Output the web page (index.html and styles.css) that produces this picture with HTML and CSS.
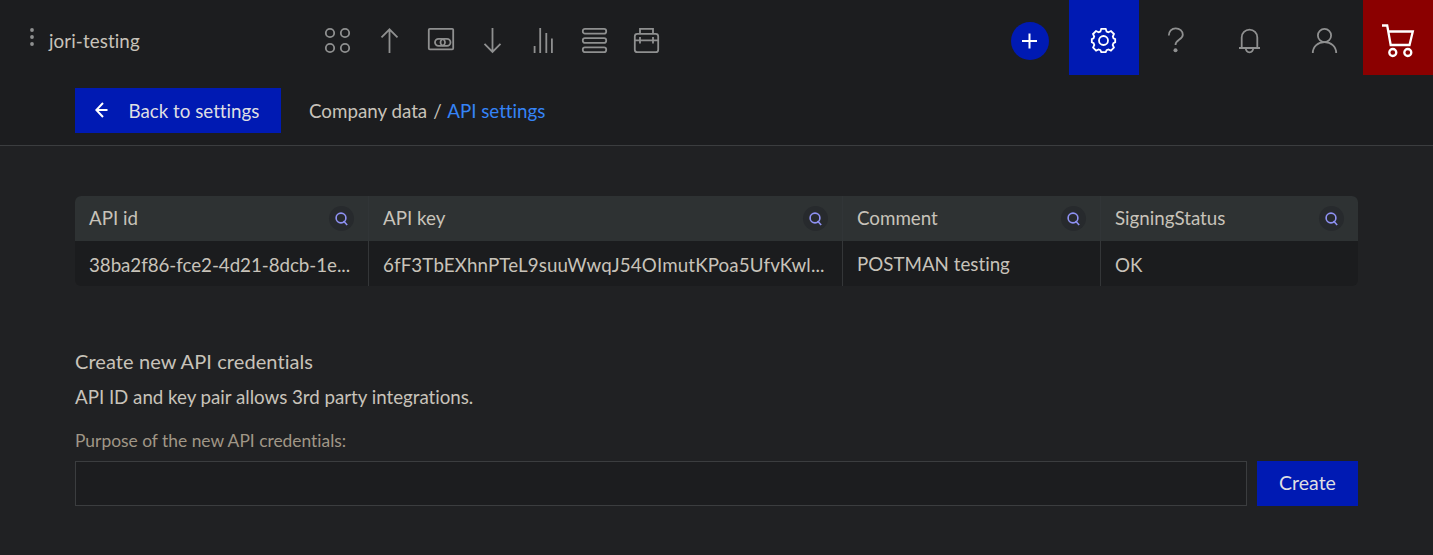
FILE: index.html
```html
<!DOCTYPE html>
<html lang="en">
<head>
<meta charset="utf-8">
<title>API settings</title>
<link rel="stylesheet" href="styles.css">
</head>
<body>
<header class="topbar">
  <div class="brand">
    <svg class="dots" width="6" height="20" fill="currentColor"><circle cx="3" cy="3" r="1.9"/><circle cx="3" cy="10" r="1.9"/><circle cx="3" cy="17" r="1.9"/></svg>
    <span class="company">jori-testing</span>
  </div>
  <nav class="main-nav">
    <svg class="icon" viewBox="0 0 25 25"><circle cx="5" cy="5" r="4.2"/><circle cx="20" cy="5" r="4.2"/><circle cx="5" cy="20" r="4.2"/><circle cx="20" cy="20" r="4.2"/></svg>
    <svg class="icon" viewBox="0 0 25 25"><path d="M12.5 25V1.5M4.5 9.3L12.5 1.3L20.5 9.3"/></svg>
    <svg class="icon wide" viewBox="0 0 26 25"><rect x=".8" y=".8" width="24.4" height="20.5" rx="1"/><rect x="7" y="10.8" width="10" height="7" rx="3.5"/><rect x="12.5" y="10.8" width="10" height="7" rx="3.5"/></svg>
    <svg class="icon" viewBox="0 0 25 25"><path d="M12.5 0V23.7M4.5 15.9L12.5 23.9L20.5 15.9"/></svg>
    <svg class="icon" viewBox="0 0 25 25"><path d="M3.6 18v7M9.2 0v25M15.3 5v20M20.9 10.5V25"/></svg>
    <svg class="icon" viewBox="0 0 25 25"><rect x=".8" y=".8" width="23.4" height="4.8" rx="2.2"/><rect x=".8" y="10.1" width="23.4" height="4.8" rx="2.2"/><rect x=".8" y="19.4" width="23.4" height="4.8" rx="2.2"/></svg>
    <svg class="icon" viewBox="0 0 25 25"><rect x=".8" y="5.8" width="23.4" height="18.4" rx="2.5"/><path d="M6 5.8V.8H19V5.8M.8 12.3H24.2M6 9v6.5M19 9v6.5"/></svg>
  </nav>
  <div class="actions">
    <div class="action add"><span class="add-circle"><svg width="16" height="16" viewBox="0 0 16 16"><path d="M7.500 .5v15M0 8h15"/></svg></span></div>
    <div class="action active"><svg class="icon gear" viewBox="0 0 25 25"><circle cx="12.5" cy="12.5" r="4.5"/><path d="M10.3 .8h4.4l.9 2.7 1.8.7 2.6-1.2 3 3-1.2 2.6.7 1.8 1.7.7v3.2l-1.800.9-.7 1.800 1.200 2.600-3 3-2.500-1.100-1.800.7-.9 2h-4.400l-.9-2-1.800-.7-2.500 1.100-3-3 1.200-2.600-.7-1.800L.8 14.300v-3.200l1.700-.7.7-1.800L2 6l3-3 2.600 1.200 1.800-.7z"/></svg></div>
    <div class="action"><svg class="icon help" viewBox="0 0 25 25"><path d="M5.800 7.500C5.800 3.300 8.700.3 12.700.3S19.800 3 19.800 6.700C19.800 11.500 12.500 11.600 12.500 17"/><circle class="dot" cx="12.500" cy="22.200" r="2"/></svg></div>
    <div class="action"><svg class="icon bell" viewBox="0 0 25 25"><path d="M2 20h21M4.700 20V9.500a7.800 7.800 0 0 1 15.600 0V20M8.700 20c.2 2.900 1.600 4.300 3.800 4.300s3.600-1.400 3.800-4.300"/></svg></div>
    <div class="action"><svg class="icon" viewBox="0 0 25 25"><circle cx="12.500" cy="7.500" r="6.600"/><path d="M.8 25C.8 18.500 6 14.100 12.500 14.100S24.200 18.500 24.200 25"/></svg></div>
    <div class="action cart"><svg width="34" height="34" viewBox="0 0 34 34"><path d="M1 1.500h5.200l3.500 19.500h18.800l3.300-13.500H7.300"/><circle cx="11.800" cy="28.500" r="3.500"/><circle cx="26.800" cy="28.500" r="3.500"/></svg></div>
  </div>
</header>
<div class="subbar">
  <button class="btn back"><svg width="13" height="16" viewBox="0 0 13 16"><path d="M12.500 8H1.500M8 1L1.300 8L8 15"/></svg><span>Back to settings</span></button>
  <div class="crumbs"><span>Company data</span><span class="slash">/</span><a class="current">API settings</a></div>
</div>
<main class="content">
  <div class="grid">
    <div class="cell head"><span>API id</span><i class="search"><svg viewBox="0 0 13 14"><circle cx="6" cy="6" r="4.900"/><path d="M8.500 9l3.700 4"/></svg></i></div>
    <div class="cell head"><span>API key</span><i class="search"><svg viewBox="0 0 13 14"><circle cx="6" cy="6" r="4.900"/><path d="M8.500 9l3.700 4"/></svg></i></div>
    <div class="cell head"><span>Comment</span><i class="search"><svg viewBox="0 0 13 14"><circle cx="6" cy="6" r="4.900"/><path d="M8.500 9l3.700 4"/></svg></i></div>
    <div class="cell head"><span>SigningStatus</span><i class="search"><svg viewBox="0 0 13 14"><circle cx="6" cy="6" r="4.900"/><path d="M8.500 9l3.700 4"/></svg></i></div>
    <div class="cell id"><span>38ba2f86-fce2-4d21-8dcb-1e...</span></div>
    <div class="cell key"><span>6fF3TbEXhnPTeL9suuWwqJ54OImutKPoa5UfvKwl...</span></div>
    <div class="cell raised"><span>POSTMAN testing</span></div>
    <div class="cell"><span>OK</span></div>
  </div>
  <h2 class="title">Create new API credentials</h2>
  <p class="intro">API ID and key pair allows 3rd party integrations.</p>
  <label class="label" for="purpose">Purpose of the new API credentials:</label>
  <div class="form-row">
    <input class="field" id="purpose" type="text">
    <button class="btn create">Create</button>
  </div>
</main>
</body>
</html>
```
FILE: styles.css
```css
* { box-sizing: border-box; }
body {
  margin: 0;
  height: 555px;
  overflow: hidden;
  background: #202123;
  color: #c8c3ba;
  font: 18.75px/30px Lato, sans-serif;
  font-variant-ligatures: none;
}
svg { display: block; flex: none; }
.topbar {
  display: flex;
  height: 75px;
  background: #1c1d1f;
  color: #8f9090;
}
.brand { display: flex; width: 325px; padding: 26px 0 0 29px; gap: 14px; }
.dots { margin-top: 1px; }
.company { color: #c8c3ba; letter-spacing: .1px; }
.main-nav { display: flex; gap: 26.2px; padding: 28px 0 0 .4px; }
.icon {
  width: 25px;
  height: 25px;
  fill: none;
  stroke: currentColor;
  stroke-width: 1.8;
  overflow: visible;
}
.icon.wide { width: 26px; }
.icon.gear { margin-right: 1px; }
.icon.help { margin-right: 4px; }
.icon.bell { margin-right: 3px; }
.icon .dot { fill: currentColor; stroke: none; }
.actions { display: flex; margin-left: auto; gap: 3.5px; }
.action { display: flex; justify-content: center; width: 70px; padding-top: 28px; }
.add { padding-top: 22px; width: 71px; }
.add-circle {
  display: flex;
  align-items: center;
  justify-content: center;
  width: 38px;
  height: 38px;
  border-radius: 50%;
  background: #001ab3;
}
.add-circle svg { fill: none; stroke: #fff; stroke-width: 2; }
.active { background: #001ab3; color: #fff; }
.cart { background: #8b0000; padding-top: 24px; }
.cart svg { fill: none; stroke: #fff; stroke-width: 2.3; }
.subbar {
  display: flex;
  height: 71px;
  padding: 13px 75px 0;
  background: #1c1d1f;
  border-bottom: 1px solid #3b3d3f;
}
.btn {
  border: 0;
  padding: 0;
  background: #001ab3;
  color: #dedfe3;
  font: inherit;
}
.back {
  display: flex;
  align-items: center;
  gap: 20.5px;
  width: 206px;
  height: 45px;
  padding: 0 0 0 20px;
}
.back svg { margin-bottom: 1px; fill: none; stroke: #fff; stroke-width: 2; }
.back span { padding-top: 1px; }
.crumbs { padding: 8px 0 0 28px; }
.slash { margin: 0 5.5px 0 6px; }
.current { color: #3584f7; }
.content { padding: 50px 75px 0; }
.grid {
  display: grid;
  grid-template-columns: 294px 474px 258px 257px;
  grid-auto-rows: 45px;
  overflow: hidden;
  border-radius: 6px;
  background: #1b1c1e;
}
.cell {
  display: flex;
  align-items: center;
  padding: 3px 14px 0;
  border-right: 1px solid #343638;
  white-space: nowrap;
}
.cell:nth-child(4n) { border-right: 0; }
.raised { padding-top: 1px; }
.id { letter-spacing: -.05px; }
.key { letter-spacing: .12px; }
.head {
  justify-content: space-between;
  padding-top: 0;
  background: #2e3233;
  border-color: #313537;
}
.head span { padding-bottom: 2px; }
.search {
  display: flex;
  align-items: center;
  justify-content: center;
  width: 25px;
  height: 25px;
  border-radius: 50%;
  background: #272a2d;
}
.search svg { width: 13px; height: 14px; fill: none; stroke: #8e91f2; stroke-width: 1.6; }
.title { margin: 60px 0 0; font-size: 20px; font-weight: 400; line-height: 30px; letter-spacing: .08px; }
.intro { margin: 6px 0 0; letter-spacing: -.03px; }
.label { display: block; margin-top: 15px; font-size: 17.4px; line-height: 27px; color: #a09787; }
.form-row { display: flex; gap: 10px; margin-top: 7px; }
.field {
  flex: 1;
  height: 45px;
  padding: 0 14px;
  border: 1px solid #3b3d3f;
  background: #1c1d1f;
  color: inherit;
  font: inherit;
}
.create { width: 101px; height: 45px; padding-bottom: 1px; font-size: 19.5px; }
```
